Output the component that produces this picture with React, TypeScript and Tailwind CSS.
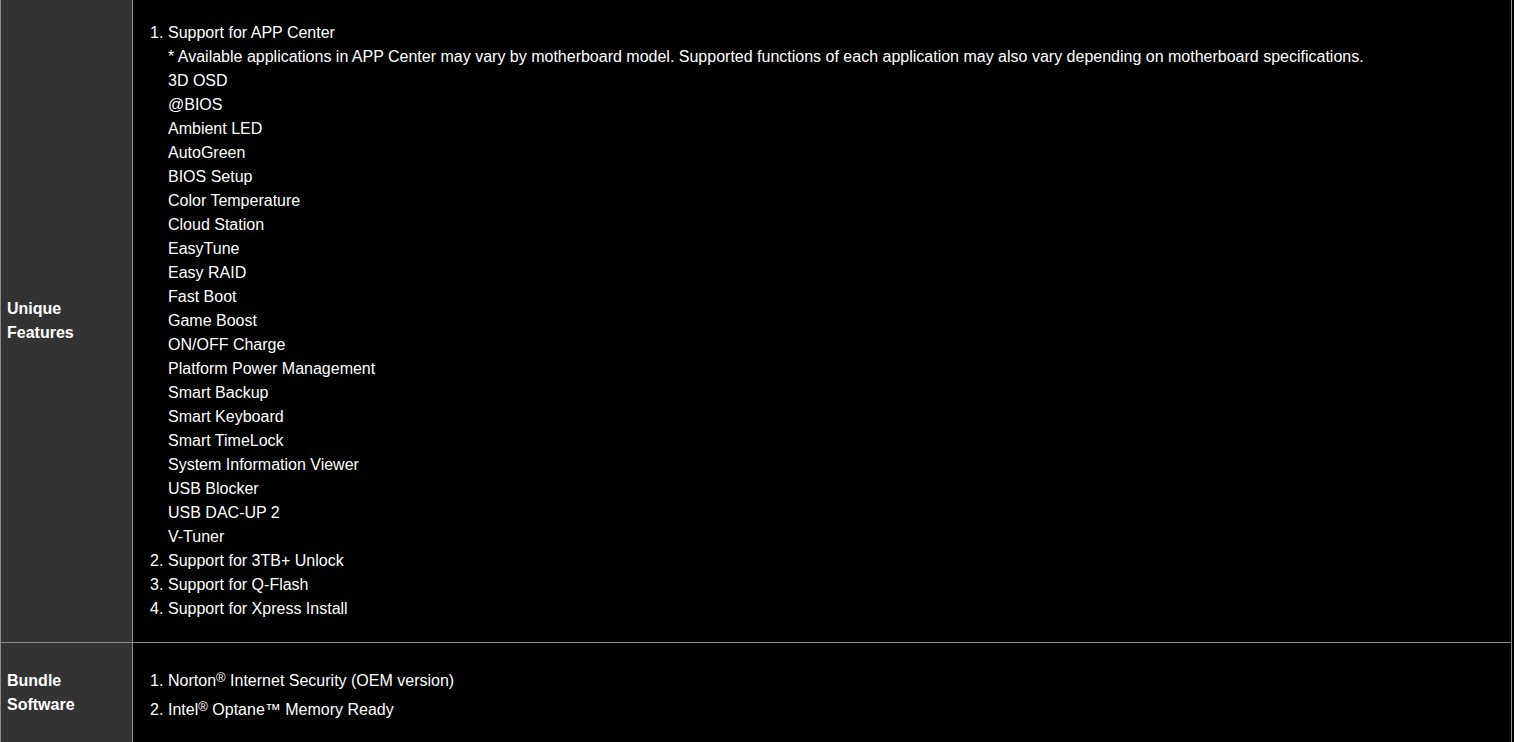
const uniqueApps = [
  '3D OSD',
  '@BIOS',
  'Ambient LED',
  'AutoGreen',
  'BIOS Setup',
  'Color Temperature',
  'Cloud Station',
  'EasyTune',
  'Easy RAID',
  'Fast Boot',
  'Game Boost',
  'ON/OFF Charge',
  'Platform Power Management',
  'Smart Backup',
  'Smart Keyboard',
  'Smart TimeLock',
  'System Information Viewer',
  'USB Blocker',
  'USB DAC-UP 2',
  'V-Tuner',
];

function Item({ n, children }: { n?: string; children: React.ReactNode }) {
  return (
    <div className="flex h-6 items-center leading-6 whitespace-nowrap">
      <span className="w-[18px] shrink-0">{n}</span>
      <span>{children}</span>
    </div>
  );
}

function Reg() {
  return <span className="relative -top-[4px] text-[13px] leading-none">®</span>;
}

export default function App() {
  return (
    <div
      className="min-h-screen w-full bg-black text-white text-[16px]"
      style={{ fontFamily: '"Liberation Sans", Arial, sans-serif' }}
    >
      <div className="w-[1512px] border-l border-r border-[#8a8a8a]">
        {/* Unique Features */}
        <div className="flex border-b border-[#8a8a8a]">
          <div className="w-[132px] shrink-0 bg-[#333333] border-r border-[#8a8a8a] flex flex-col justify-center pl-[6px] font-bold leading-6">
            <div>Unique</div>
            <div>Features</div>
          </div>
          <div className="flex-1 pl-[17px] pt-[21px] pb-[21px]">
            <Item n="1.">Support for APP Center</Item>
            <Item>
              * Available applications in APP Center may vary by motherboard model. Supported functions of each application may also vary depending on motherboard specifications.
            </Item>
            {uniqueApps.map((a) => (
              <Item key={a}>{a}</Item>
            ))}
            <Item n="2.">Support for 3TB+ Unlock</Item>
            <Item n="3.">Support for Q-Flash</Item>
            <Item n="4.">Support for Xpress Install</Item>
          </div>
        </div>

        {/* Bundle Software */}
        <div className="flex h-[99px]">
          <div className="w-[132px] shrink-0 bg-[#333333] border-r border-[#8a8a8a] flex flex-col justify-center pl-[6px] font-bold leading-6">
            <div>Bundle</div>
            <div>Software</div>
          </div>
          <div className="flex-1 pl-[17px] pt-[26px] flex flex-col gap-[5px]">
            <Item n="1.">
              Norton<Reg /> Internet Security (OEM version)
            </Item>
            <Item n="2.">
              Intel<Reg /> Optane™ Memory Ready
            </Item>
          </div>
        </div>
      </div>
    </div>
  );
}
